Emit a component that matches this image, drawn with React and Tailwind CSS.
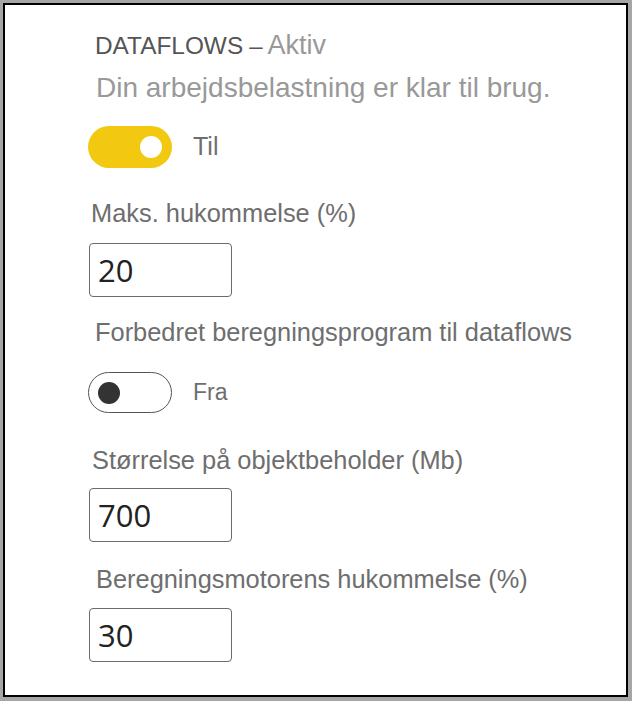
import React from 'react';

function Toggle({ on }) {
  if (on) {
    return (
      <div className="w-[84px] h-[42px] rounded-full bg-[#f2c811] flex items-center justify-end pr-[10px]">
        <div className="w-[22px] h-[22px] rounded-full bg-white" />
      </div>
    );
  }
  return (
    <div className="w-[84px] h-[41px] rounded-full border-[1.5px] border-[#555] bg-white flex items-center pl-[9px]">
      <div className="w-[22px] h-[22px] rounded-full bg-[#333]" />
    </div>
  );
}

function Field({ value, className }) {
  return (
    <div
      className={`w-[143px] h-[54px] rounded-[4px] border-[1.5px] border-[#6b6b6b] bg-white flex items-center pl-[8px] text-[31px] text-[#222] ${className}`}
      style={{ fontFamily: '"Open Sans", "Noto Sans", sans-serif' }}
    >
      {value}
    </div>
  );
}

function Label({ children, className }) {
  return (
    <div className={`h-[30px] leading-[30px] text-[25.4px] text-[#6e6e6e] whitespace-nowrap ${className}`}>
      {children}
    </div>
  );
}

export default function App() {
  return (
    <div
      className="w-[632px] h-[701px] bg-[#a6a6a6] pt-[3px] pl-[3px] pr-[4px] pb-[4px]"
      style={{ fontFamily: '"Liberation Sans", Arial, sans-serif' }}
    >
      <div className="h-full bg-white border-2 border-black flex flex-col">
        <div className="mt-[25px] ml-[90px] h-[30px] flex items-baseline leading-[30px] whitespace-nowrap">
          <span className="text-[24.4px] text-[#555]">DATAFLOWS</span>
          <span className="text-[24px] text-[#555] ml-[6px]">–</span>
          <span className="text-[27px] text-[#999] ml-[5px]">Aktiv</span>
        </div>
        <div className="mt-[13px] ml-[91px] h-[30px] leading-[30px] text-[28px] text-[#999] whitespace-nowrap">
          Din arbejdsbelastning er klar til brug.
        </div>
        <div className="mt-[23px] ml-[83px] flex items-center gap-[21px]">
          <Toggle on />
          <span className="text-[25px] text-[#6e6e6e]">Til</span>
        </div>
        <Label className="mt-[30px] ml-[86px]">Maks. hukommelse (%)</Label>
        <Field value="20" className="mt-[15px] ml-[84px]" />
        <Label className="mt-[20px] ml-[90px]">Forbedret beregningsprogram til dataflows</Label>
        <div className="mt-[25px] ml-[83px] flex items-center gap-[21px]">
          <Toggle on={false} />
          <span className="text-[23px] text-[#6e6e6e]">Fra</span>
        </div>
        <Label className="mt-[32px] ml-[87px]">Størrelse på objektbeholder (Mb)</Label>
        <Field value="700" className="mt-[13px] ml-[84px]" />
        <Label className="mt-[22px] ml-[91px]">Beregningsmotorens hukommelse (%)</Label>
        <Field value="30" className="mt-[14px] ml-[84px]" />
      </div>
    </div>
  );
}
